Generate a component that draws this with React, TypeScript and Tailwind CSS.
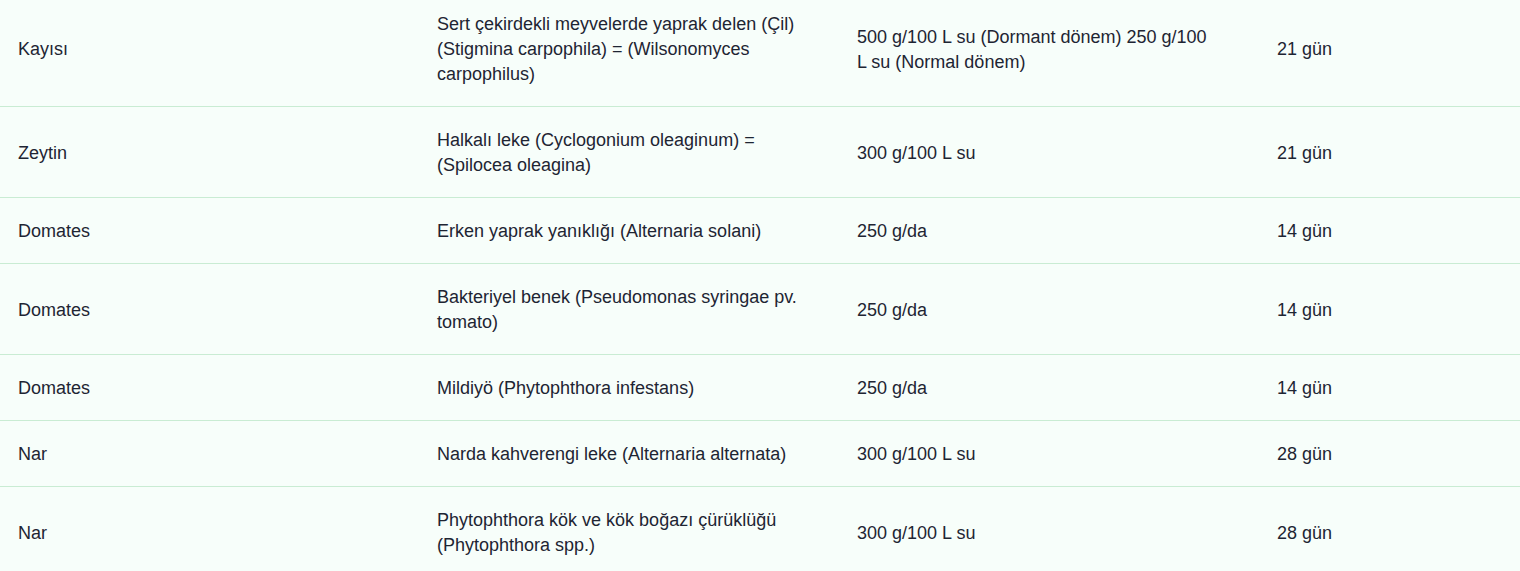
const rows = [
  {
    crop: "Kayısı",
    disease: "Sert çekirdekli meyvelerde yaprak delen (Çil) (Stigmina carpophila) = (Wilsonomyces carpophilus)",
    dose: "500 g/100 L su (Dormant dönem) 250 g/100 L su (Normal dönem)",
    phi: "21 gün",
  },
  {
    crop: "Zeytin",
    disease: "Halkalı leke (Cyclogonium oleaginum) = (Spilocea oleagina)",
    dose: "300 g/100 L su",
    phi: "21 gün",
  },
  { crop: "Domates", disease: "Erken yaprak yanıklığı (Alternaria solani)", dose: "250 g/da", phi: "14 gün" },
  {
    crop: "Domates",
    disease: "Bakteriyel benek (Pseudomonas syringae pv. tomato)",
    dose: "250 g/da",
    phi: "14 gün",
  },
  { crop: "Domates", disease: "Mildiyö (Phytophthora infestans)", dose: "250 g/da", phi: "14 gün" },
  { crop: "Nar", disease: "Narda kahverengi leke (Alternaria alternata)", dose: "300 g/100 L su", phi: "28 gün" },
  {
    crop: "Nar",
    disease: "Phytophthora kök ve kök boğazı çürüklüğü (Phytophthora spp.)",
    dose: "300 g/100 L su",
    phi: "28 gün",
  },
]

export default function App() {
  return (
    <div className="h-[571px] overflow-hidden bg-[#f7fefa] font-['Liberation_Sans',Arial,sans-serif] text-[18px] leading-[25px] text-[#1e2533]">
      <div className="-mt-[9px]">
        {rows.map((r, i) => (
          <div
            key={i}
            className="grid grid-cols-[419px_420px_420px_1fr] items-center border-b border-[#c9ecd3]"
          >
            <div className="pt-[21px] pb-[19px] pl-[18px] pr-10">{r.crop}</div>
            <div className="pt-[21px] pb-[19px] pl-[18px] pr-[25px]">{r.disease}</div>
            <div className="pt-[21px] pb-[19px] pl-[18px] pr-[47px]">{r.dose}</div>
            <div className="pt-[21px] pb-[19px] pl-[18px] pr-10">{r.phi}</div>
          </div>
        ))}
      </div>
    </div>
  )
}
